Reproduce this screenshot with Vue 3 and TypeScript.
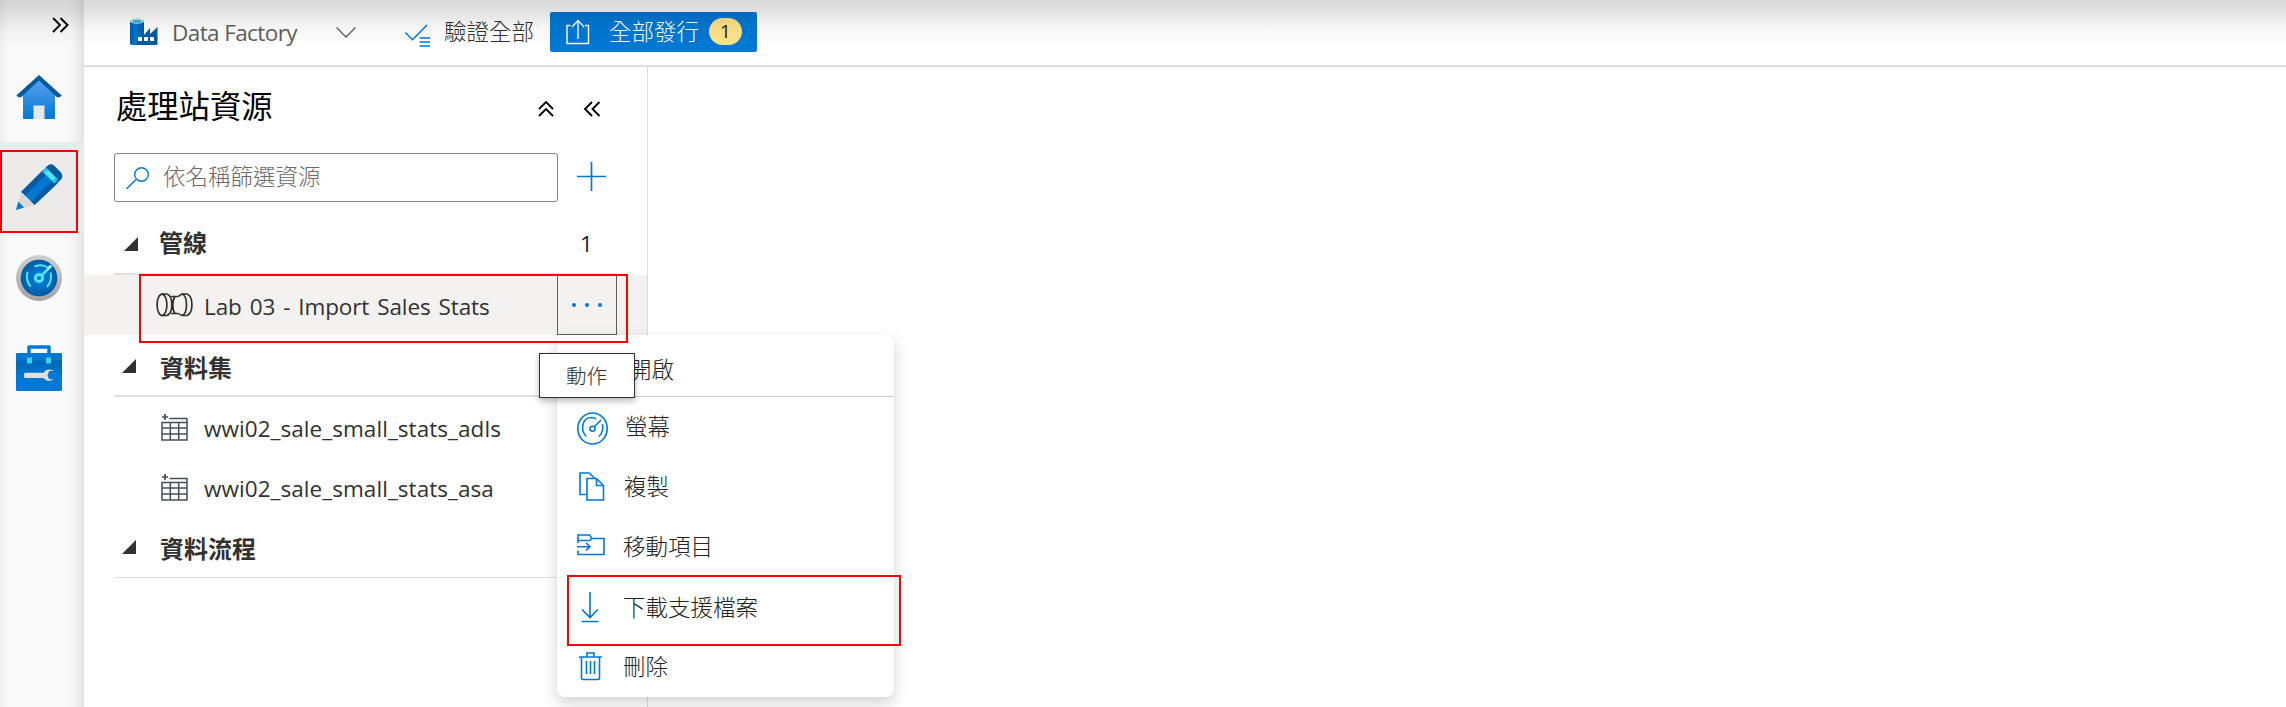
<script setup lang="ts">
interface MenuItem { id: string; label: string; height: number; pad: number }

const datasets: string[] = ['wwi02_sale_small_stats_adls', 'wwi02_sale_small_stats_asa']

const actions: MenuItem[] = [
  { id: 'monitor', label: '螢幕', height: 60, pad: 68 },
  { id: 'copy', label: '複製', height: 59, pad: 67 },
  { id: 'move', label: '移動項目', height: 61, pad: 66 },
  { id: 'download', label: '下載支援檔案', height: 62, pad: 66 },
  { id: 'trash', label: '刪除', height: 55, pad: 66 },
]
</script>

<template>
  <div class="shell">
    <nav class="rail">
      <div class="expand">
        <svg width="18" height="18" viewBox="0 0 18 18" class="ink"><path d="M2 2l7 7-7 7M9.500 2l7 7-7 7" /></svg>
      </div>
      <div class="rail-item">
        <svg width="46" height="46" viewBox="0 0 46 46">
          <defs><linearGradient id="house" x1="0" y1="0" x2="0" y2="1"><stop offset="0" stop-color="#5ea0ef" /><stop offset="1" stop-color="#0078d4" /></linearGradient></defs>
          <path d="M7 20L23 5l16 15v23.500q0 1.500-1.500 1.500h-29Q7 45 7 43.500z" fill="url(#house)" />
          <path d="M17.500 31.500h11V45h-11z" fill="#e6e6e6" />
          <path d="M23 1l22.700 20.500-2.200 1.800H41L23 6.500 5 23.300H2.500L.3 21.500z" fill="#005ba1" />
        </svg>
      </div>
      <div class="rail-item active">
        <svg width="46" height="46" viewBox="0 0 46 46">
          <path d="M5 28L31.500 2q3-2 6 0L45 9q2 3.500-.5 7L18.500 41z" fill="#0078d4" />
          <path d="M5 28L27 6l3.800 3.700L8.500 32zM15 38L37 15.500l4.500 4L18.500 41z" fill="#005ba1" />
          <path d="M30 3.500L32.500 1q3-1.500 5.500.5L45 8.500q2 3 .5 6L42 18z" fill="#005ba1" />
          <path d="M26 7.500l4-4L42.300 15.500l-4 4z" fill="#32bedd" />
          <path d="M29 9l3-3 7.500 7.500-3 3z" fill="#50e6ff" />
          <path d="M5.500 28l13 13L0 46z" fill="#d9d9d9" />
          <path d="M2.300 37.500L8 43.600 0 46z" fill="#0078d4" />
        </svg>
      </div>
      <div class="rail-item lower">
        <svg width="46" height="46" viewBox="0 0 46 46">
          <defs>
            <linearGradient id="rim" x1="0" y1="0" x2="0" y2="1"><stop offset="0" stop-color="#cfcfcf" /><stop offset="1" stop-color="#a3a3a3" /></linearGradient>
            <radialGradient id="dial"><stop offset=".3" stop-color="#0078d4" /><stop offset="1" stop-color="#005ba1" /></radialGradient>
          </defs>
          <circle cx="23" cy="23" r="23" fill="url(#rim)" />
          <circle cx="23" cy="23" r="18.300" fill="url(#dial)" />
          <g fill="none" stroke="#50e6ff" stroke-width="2"><path d="M18.500 11.500q8-3 13 1M11.700 16.700q-2.500 8 3 15M34.500 17.500q2 8-3.500 14.500" /><circle cx="23" cy="23" r="3.600" stroke-width="3" /></g>
          <path d="M24.500 19.800L34.500 9.500l2 2-10 10z" fill="#50e6ff" /><path d="M31 13l3-3 1.500 1.500-3 3z" fill="#c3f1ff" />
        </svg>
      </div>
      <div class="rail-item lower">
        <svg width="46" height="46" viewBox="0 0 46 46">
          <defs><linearGradient id="box" x1="0" y1="0" x2="0" y2="1"><stop offset="0" stop-color="#005ba1" /><stop offset=".6" stop-color="#0078d4" /></linearGradient></defs>
          <path d="M13 8V2h20v6" fill="none" stroke="#0078d4" stroke-width="3.500" stroke-linejoin="round" />
          <rect y="8" width="46" height="38" rx="1.500" fill="url(#box)" />
          <path d="M0 15.500V9.500Q0 8 1.500 8h43Q46 8 46 9.500v6z" fill="#0078d4" />
          <path d="M11 12.500h5v6h-5zM30 12.500h5v6h-5z" fill="#32d4f5" />
          <path d="M9.500 27.700h18.300q1.700-3.200 5.700-3.200 2.500 0 4.200 1.500h-4.500l-1.700 4.500 1.700 3.800h4.500q-4 2.800-7.500 1-1.500-.8-2.400-2.300H9.500Q8 33 8 31.500v-2.300q0-1.500 1.500-1.500z" fill="#e0e0e0" />
        </svg>
      </div>
      <div class="mark mark-rail"></div>
    </nav>

    <main class="main">
      <header class="topbar">
        <svg class="factory" width="28" height="28" viewBox="0 0 28 28">
          <defs><linearGradient id="silo" x1="0" x2="1"><stop offset="0" stop-color="#005ba1" /><stop offset=".4" stop-color="#0078d4" /><stop offset="1" stop-color="#005ba1" /></linearGradient></defs>
          <path d="M0 3h14v24H2q-2 0-2-2z" fill="url(#silo)" />
          <path d="M14 17l6-7v6l7.500-7v16.500q0 1.500-1.500 1.500H7V21z" fill="#005ba1" />
          <path d="M0 2.500h14V22H0z" fill="url(#silo)" />
          <ellipse cx="7" cy="3" rx="7" ry="2.700" fill="#d5e6ef" /><ellipse cx="7" cy="3.200" rx="5" ry="1.800" fill="#32bedd" />
          <path d="M8 19h4v4H8zM14 19h4v4h-4zM20 19h4v4h-4z" fill="#fff" />
        </svg>
        <span class="product">Data Factory</span>
        <svg class="drop" width="20" height="11" viewBox="0 0 20 11"><path d="M.5.500L10 10 19.500.5" fill="none" stroke="#605e5c" stroke-width="1.300" /></svg>
        <svg class="validate-icon" width="26" height="23" viewBox="0 0 26 23"><g fill="none" stroke="#0078d4" stroke-width="1.500"><path d="M.5 8.500l7 7.200L22 1M14.500 14H25M14.500 18H25M14.500 22H25" /></g></svg>
        <span class="validate">驗證全部</span>
        <button class="publish">
          <svg width="24" height="26" viewBox="0 0 24 26"><path d="M4.500 6.500H1v18h21.500v-18H19M12 20V2M6 8l6-6.500L18 8" fill="none" stroke="#fff" stroke-width="1.400" /></svg>
          <span class="publish-label">全部發行</span>
          <span class="badge">1</span>
        </button>
      </header>

      <aside class="panel">
        <div class="panel-head">
          <h1>處理站資源</h1>
          <svg class="ink" width="18" height="18" viewBox="0 0 18 18"><path d="M2 9l7-7 7 7M2 16l7-7 7 7" /></svg>
          <svg class="ink fold" width="18" height="18" viewBox="0 0 18 18"><path d="M9 2L2 9l7 7M16.500 2l-7 7 7 7" /></svg>
        </div>
        <div class="filter-row">
          <div class="filter">
            <svg width="24" height="23" viewBox="0 0 24 23"><path d="M.5 22l9.500-9.500" stroke="#0078d4" stroke-width="1.500" /><circle cx="15.500" cy="7.500" r="6.800" fill="none" stroke="#0078d4" stroke-width="1.400" /></svg>
            <span>依名稱篩選資源</span>
          </div>
          <svg class="add" width="29" height="29" viewBox="0 0 29 29"><path d="M14.500 0v29M0 14.500h29" stroke="#0078d4" stroke-width="1.700" /></svg>
        </div>

        <section class="group first">
          <svg class="tri" width="14" height="14"><path d="M14 0v14H0z" /></svg>
          <h2>管線</h2><span class="count">1</span>
        </section>
        <div class="entry selected">
          <svg class="pipe" width="37" height="24" viewBox="0 0 37 24"><g fill="none" stroke="#323130" stroke-width="1.700">
            <path d="M6 1h5M6 22.500h5M26 1h5M26 22.500h5M15 3.500h7.500M15 20.500h7.500" /><ellipse cx="6" cy="11.800" rx="4.900" ry="10.700" />
            <path d="M11 1c3 1 4.800 5 4.800 10.800S14 21.500 11 22.500M26 1c-2 1-3 2-3.500 2.500M26 22.500c-2-1-3-1.500-3.500-2M19 3.500c-3 4-3 13 0 17M26 1c3 1 4.500 5 4.500 10.800s-1.500 9.700-4.500 10.700M31 1c3 1 4.900 5 4.900 10.800S34 21.500 31 22.500" />
          </g></svg>
          <span class="name pipeline-name">Lab 03 - Import Sales Stats</span>
          <button class="more"><i></i><i></i><i></i></button>
        </div>
        <section class="group second">
          <svg class="tri" width="14" height="14"><path d="M14 0v14H0z" /></svg>
          <h2>資料集</h2>
        </section>
        <div v-for="name in datasets" :key="name" class="entry dataset">
          <svg class="table" width="27" height="27" viewBox="0 0 27 27"><g fill="none" stroke="#46505a" stroke-width="1.500"><path d="M8.500 4.500H26V26H1V8.500h25M1 14h25M1 20h25M9.300 9v17M17.700 9v17" /><path d="M4 0v6M1 3h6" stroke-width="1.700" /></g></svg>
          <span class="name">{{ name }}</span>
        </div>
        <section class="group third">
          <svg class="tri" width="14" height="14"><path d="M14 0v14H0z" /></svg>
          <h2>資料流程</h2>
        </section>
      </aside>
    </main>

    <div class="menu">
      <div class="menu-open">開啟</div>
      <div v-for="a in actions" :key="a.id" class="action" :style="{ height: a.height + 'px' }">
        <span class="glyph" :style="{ width: a.pad + 'px' }">
          <svg v-if="a.id === 'monitor'" class="g-monitor" width="32" height="33" viewBox="0 0 32 33"><ellipse cx="15.500" cy="16.500" rx="14.700" ry="15.500" /><path d="M9.300 24.500C3 18 5 6 14 5.500q3 0 5 1.500M25.300 12c1.500 4 0 9.500-3.500 12.500M17 15l7-7" /><circle cx="15.500" cy="16.800" r="2.500" /></svg>
          <svg v-else-if="a.id === 'copy'" class="g-copy" width="26" height="29" viewBox="0 0 26 29"><path d="M7 22.500H1V1h9l6 5.500M8 6.500h9.500l7 7V28H8zM17.500 6.500v7h7" /></svg>
          <svg v-else-if="a.id === 'move'" class="g-move" width="28" height="22" viewBox="0 0 28 22"><path d="M1 9V1h11.500l2.500 3.500h12V20.500H1v-4M1 6.500h11.500L15 4.500M0 12.700h12.500M9 9l4 3.700L9 16.500" /></svg>
          <svg v-else-if="a.id === 'download'" class="g-download" width="20" height="31" viewBox="0 0 20 31"><path d="M10 0v25M2 17.500l8 8 8-8M1.500 29.500h17" /></svg>
          <svg v-else class="g-trash" width="24" height="29" viewBox="0 0 24 29"><path d="M0 5h23M8 4.500V1h7v3.500M2.500 5v21q0 1.500 1.500 1.500h15q1.500 0 1.500-1.500V5M7.500 9v13M11.500 9v13M15.500 9v13" /></svg>
        </span>
        <span>{{ a.label }}</span>
      </div>
    </div>
    <div class="tooltip">動作</div>
    <div class="mark mark-pipeline"></div>
    <div class="mark mark-download"></div>
    <div class="shade"></div>
  </div>
</template>

<style>
html, body { overflow: hidden; background: #fff; }
</style>

<style scoped>
* { box-sizing: border-box; }
.shell { position: relative; display: flex; width: 2286px; height: 707px; overflow: hidden; background: #fff; color: #323130; font-family: "Open Sans", "Noto Sans CJK TC", sans-serif; font-size: 22.500px; font-weight: 300; }
svg { flex: none; display: block; overflow: visible; }
.ink { fill: none; stroke: #000; stroke-width: 1.900; }
.rail { position: relative; flex: none; width: 84px; background: linear-gradient(90deg, #efefef 0, #f9f9f9 9px, #f9f9f9 68px, #f3f3f3 75px, #e3e3e3 84px); }
.expand { height: 52px; padding: 16px 0 0 51px; }
.rail-item { height: 90px; display: flex; align-items: center; padding-left: 16px; }
.lower { padding-top: 2px; }
.active { background: #edebe9; }
.main { flex: 1; display: flex; flex-direction: column; }
.topbar { flex: none; height: 67px; border-bottom: 2px solid #dedede; display: flex; align-items: flex-start; padding-left: 46px; white-space: nowrap; }
.factory { margin-top: 18px; }
.product { width: 164px; margin: 15px 0 0 14px; line-height: 36px; color: #605e5c; font-weight: 400; font-size: 22.500px; letter-spacing: -.6px; }
.drop { margin-top: 27px; }
.validate-icon { margin: 24px 0 0 49px; }
.validate { width: 90px; margin: 14px 0 0 13px; line-height: 36px; }
.publish { width: 207px; height: 40px; margin: 12px 0 0 16px; padding: 0 0 0 16px; border: 0; border-radius: 2px; background: #0078d4; color: #fff; display: flex; align-items: flex-start; font: inherit; }
.publish svg { margin-top: 7px; }
.publish-label { width: 91px; margin: 2px 0 0 19px; line-height: 36px; text-align: left; }
.badge { margin: 6px 0 0 9px; width: 33px; height: 27px; border-radius: 13.500px; background: #ffe388; color: #222; font-size: 19px; line-height: 26px; text-align: center; font-weight: 400; }
.panel { flex: none; width: 564px; height: 640px; border-right: 1px solid #dcdcdc; }
.panel-head { height: 86px; display: flex; align-items: flex-start; padding-left: 32px; }
.panel-head h1 { width: 421px; margin: 17px 0 0; font-size: 31.300px; line-height: 44px; font-weight: 400; color: #000; white-space: nowrap; }
.panel-head svg { margin-top: 33px; }
.panel-head .fold { margin-left: 28px; }
.filter-row { height: 49px; display: flex; padding-left: 30px; }
.filter { width: 444px; height: 49px; border: 1px solid #858381; border-radius: 3px; padding: 0 0 0 11px; display: flex; color: #6c6a68; }
.filter svg { margin-top: 13px; }
.filter span { margin-left: 13px; line-height: 45px; }
.add { margin: 9px 0 0 19px; }
.group { position: relative; display: flex; margin-left: 30px; width: 503px; border-bottom: 2px solid #e0e0e0; white-space: nowrap; }
.group h2 { flex: none; margin: 0; width: 422px; padding-left: 22px; font-size: 24px; line-height: 34px; font-weight: 700; }
.tri { fill: #323130; }
.first { height: 73px; padding: 24px 0 0 10px; }
.first .tri { margin-top: 11px; }
.first h2 { padding-left: 21px; }
.count { line-height: 34px; margin: 1px 0 0 20px; font-weight: 400; font-size: 22.500px; color: #201f1e; }
.second { height: 62px; padding: 16px 0 0 8px; }
.second .tri { margin-top: 8px; }
.second h2 { padding-left: 24px; }
.third { height: 61px; padding: 15px 0 0 8px; border-bottom-width: 1px; }
.third .tri { margin-top: 8px; }
.third h2 { padding-left: 24px; }
.entry { height: 60px; display: flex; align-items: flex-start; white-space: nowrap; }
.selected { background: #f3f2f1; }
.pipe { margin: 18px 0 0 72px; }
.name { margin: 15px 0 0 16px; line-height: 34px; font-weight: 400; letter-spacing: .06px; }
.pipeline-name { width: 353px; margin-left: 11px; letter-spacing: -.1px; word-spacing: 2.200px; }
.more { width: 60px; height: 60px; border: 1px solid #605e5c; background: none; padding: 0 0 0 14px; display: flex; align-items: center; gap: 9px; }
.more i { width: 4px; height: 4px; border-radius: 50%; background: #0078d4; }
.dataset { padding-left: 77px; }
.table { margin-top: 17px; }
.menu { position: absolute; left: 557px; top: 335px; width: 337px; height: 362px; border-radius: 8px; background: #fff; box-shadow: 0 6px 15px rgba(0,0,0,.18); color: #222; }
.menu-open { height: 62px; padding: 18px 0 0 72px; line-height: 34px; border-bottom: 1px solid #c8c8c8; }
.action { display: flex; align-items: center; white-space: nowrap; }
.action > span:last-child { line-height: 34px; }
.glyph { flex: none; }
.glyph svg { fill: none; stroke: #0078d4; stroke-width: 1.600; }
.g-monitor { margin: 2px 0 0 20px; }
.g-copy { margin-left: 22px; }
.g-move { margin: 0 0 4px 20px; }
.g-download { margin: 0 0 2px 23px; }
.g-trash { margin-left: 22px; }
.tooltip { position: absolute; left: 539px; top: 353px; width: 96px; height: 45px; border: 1px solid #323130; background: #fff; box-shadow: 0 3px 6px rgba(0,0,0,.28); font-size: 20.500px; line-height: 44px; text-align: center; padding-right: 1px; }
.mark { position: absolute; border: 2px solid #f00; }
.mark-rail { left: 0; top: 150px; width: 78px; height: 83px; }
.mark-pipeline { left: 139px; top: 274px; width: 489px; height: 69px; }
.mark-download { left: 567px; top: 575px; width: 334px; height: 71px; }
.shade { position: absolute; left: 0; top: 0; width: 2286px; height: 47px; pointer-events: none; background: linear-gradient(rgba(0,0,0,.15), rgba(0,0,0,.115) 25%, rgba(0,0,0,.035) 60%, rgba(0,0,0,0)); }
</style>
